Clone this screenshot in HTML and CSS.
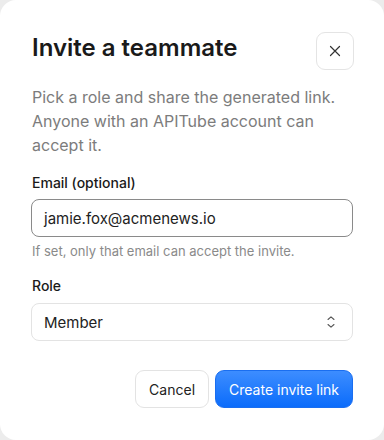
FILE: index.html
```html
<!DOCTYPE html>
<html lang="en">
<head>
<meta charset="utf-8">
<title>Invite a teammate</title>
<link rel="stylesheet" href="styles.css">
</head>
<body>
<div class="dialog" role="dialog" aria-labelledby="dlg-title">
  <div class="header">
    <h1 id="dlg-title" class="title">Invite a teammate</h1>
    <button class="close" aria-label="Close">
      <svg width="12" height="12" viewBox="0 0 12 12" fill="none" stroke="#333" stroke-width="1.2" stroke-linecap="round"><path d="M1.5 1.5l9 9M10.5 1.5l-9 9"/></svg>
    </button>
  </div>
  <p class="desc">Pick a role and share the generated link. Anyone with an APITube account can accept it.</p>
  <div class="field">
    <label class="label" for="email">Email (optional)</label>
    <div class="input focused"><span>jamie.fox@acmenews.io</span></div>
    <div class="help">If set, only that email can accept the invite.</div>
  </div>
  <div class="field role">
    <label class="label">Role</label>
    <div class="input select">
      <span>Member</span>
      <svg width="10" height="14" viewBox="0 0 10 14" fill="none" stroke="#555" stroke-width="1.1" stroke-linecap="round" stroke-linejoin="round"><path d="M2 4.5L5 1.8 8 4.5M2 9.5L5 12.2 8 9.5"/></svg>
    </div>
  </div>
  <div class="actions">
    <button class="btn secondary">Cancel</button>
    <button class="btn primary">Create invite link</button>
  </div>
</div>
</body>
</html>
```

FILE: styles.css
```css
* { box-sizing: border-box; }
html, body { margin: 0; padding: 0; }
body {
  background: #ececec;
  font-family: Inter, "Noto Sans", sans-serif;
  color: #1a1a1a;
}
.dialog {
  width: 384px;
  height: 440px;
  background: #fff;
  border-radius: 16px;
  padding: 32px 31px 32px 32px;
  display: flex;
  flex-direction: column;
}
.header {
  display: flex;
  justify-content: space-between;
  align-items: flex-start;
}
.title {
  margin: 0;
  font-size: 24px;
  line-height: 32px;
  font-weight: 600;
  color: #1a1a1a;
}
.close {
  width: 38px;
  height: 38px;
  border: 1px solid #e4e4e4;
  border-radius: 9px;
  background: #fff;
  display: flex;
  align-items: center;
  justify-content: center;
  padding: 0;
  margin-right: -1px;
}
.desc {
  margin: 15px 0 0;
  font-size: 16px;
  line-height: 24px;
  color: #7c7c7c;
}
.field {
  margin-top: 16px;
  display: flex;
  flex-direction: column;
}
.label {
  font-size: 14px;
  line-height: 20px;
  font-weight: 500;
  color: #1a1a1a;
}
.input {
  margin-top: 6px;
  margin-left: -1px;
  height: 38px;
  border: 1px solid #e3e3e3;
  border-radius: 8px;
  padding: 0 12px;
  display: flex;
  align-items: center;
  font-size: 15px;
  color: #222;
}
.input.focused {
  border: 1.5px solid #8a8a8a;
}
.select {
  justify-content: space-between;
  margin-top: 7px;
  padding-right: 16px;
}
.help {
  margin-top: 5px;
  font-size: 13px;
  line-height: 18px;
  color: #8a8a8a;
}
.role { margin-top: 16px; }
.actions {
  margin-top: auto;
  display: flex;
  justify-content: flex-end;
  gap: 6px;
}
.btn {
  height: 38px;
  border-radius: 9px;
  font-family: Inter, "Noto Sans", sans-serif;
  font-size: 14px;
  font-weight: 400;
  padding: 0 13px;
  white-space: nowrap;
  cursor: pointer;
}
.secondary {
  background: #fff;
  border: 1px solid #e3e3e3;
  color: #222;
}
.primary {
  background: linear-gradient(#3d8dff, #0b6cfb);
  border: 1px solid #1a6ef0;
  color: #fff;
}
```
